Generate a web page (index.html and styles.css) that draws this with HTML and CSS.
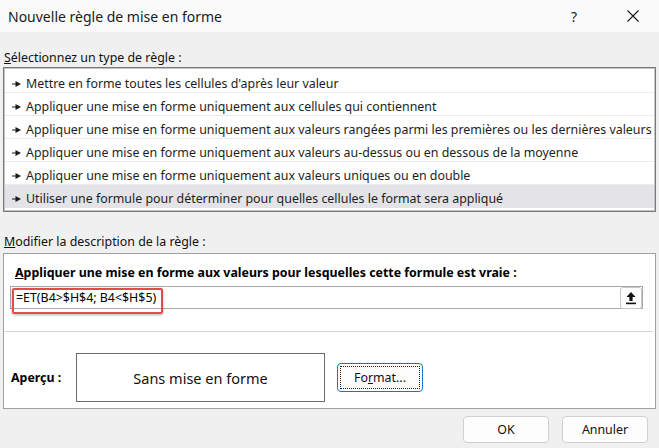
FILE: index.html
```html
<!DOCTYPE html>
<html lang="fr">
<head>
    <meta charset="UTF-8">
    <title>Nouvelle règle de mise en forme</title>
    <link rel="stylesheet" href="styles.css">
</head>
<body>
    <div class="dialog">
        <header class="titlebar">
            <span class="title">Nouvelle règle de mise en forme</span>
            <span class="help">?</span>
            <svg class="close" width="12" height="12" viewBox="0 0 12 12">
                <path d="M0.5 0.5 L11.5 11.5 M11.5 0.5 L0.5 11.5" stroke="#1a1a1a" stroke-width="1.1" fill="none"/>
            </svg>
        </header>

        <div class="content">
            <p class="label"><u>S</u>électionnez un type de règle :</p>
            <ul class="rule-list">
                <li><svg class="arrow" width="9" height="6" viewBox="0 0 9 6"><path d="M0 2.4 H3.5 V0 L9 3 L3.5 6 V3.6 H0 Z" fill="#1a1a1a"/></svg>Mettre en forme toutes les cellules d'après leur valeur</li>
                <li><svg class="arrow" width="9" height="6" viewBox="0 0 9 6"><path d="M0 2.4 H3.5 V0 L9 3 L3.5 6 V3.6 H0 Z" fill="#1a1a1a"/></svg>Appliquer une mise en forme uniquement aux cellules qui contiennent</li>
                <li><svg class="arrow" width="9" height="6" viewBox="0 0 9 6"><path d="M0 2.4 H3.5 V0 L9 3 L3.5 6 V3.6 H0 Z" fill="#1a1a1a"/></svg>Appliquer une mise en forme uniquement aux valeurs rangées parmi les premières ou les dernières valeurs</li>
                <li><svg class="arrow" width="9" height="6" viewBox="0 0 9 6"><path d="M0 2.4 H3.5 V0 L9 3 L3.5 6 V3.6 H0 Z" fill="#1a1a1a"/></svg>Appliquer une mise en forme uniquement aux valeurs au-dessus ou en dessous de la moyenne</li>
                <li><svg class="arrow" width="9" height="6" viewBox="0 0 9 6"><path d="M0 2.4 H3.5 V0 L9 3 L3.5 6 V3.6 H0 Z" fill="#1a1a1a"/></svg>Appliquer une mise en forme uniquement aux valeurs uniques ou en double</li>
                <li class="selected"><svg class="arrow" width="9" height="6" viewBox="0 0 9 6"><path d="M0 2.4 H3.5 V0 L9 3 L3.5 6 V3.6 H0 Z" fill="#1a1a1a"/></svg>Utiliser une formule pour déterminer pour quelles cellules le format sera appliqué</li>
            </ul>

            <p class="label label-desc"><u>M</u>odifier la description de la règle :</p>
            <section class="desc-box">
                <p class="desc-title"><u>A</u>ppliquer une mise en forme aux valeurs pour lesquelles cette formule est vraie :</p>
                <div class="formula">
                    <span class="formula-text">=ET(B4&gt;$H$4; B4&lt;$H$5)</span>
                    <span class="highlight"></span>
                    <button class="collapse">
                        <svg width="12" height="14" viewBox="0 0 12 14">
                            <path d="M6 1 L10.5 6 L7.6 6 L7.6 10 L4.4 10 L4.4 6 L1.5 6 Z" fill="#111"/>
                            <rect x="1" y="11.6" width="10" height="1.6" fill="#111"/>
                        </svg>
                    </button>
                </div>
                <hr class="divider">
                <div class="preview-row">
                    <span class="preview-label">Aperçu :</span>
                    <div class="preview">Sans mise en forme</div>
                    <button class="btn format"><span class="focus">Fo<u>r</u>mat...</span></button>
                </div>
            </section>

            <div class="actions">
                <button class="btn">OK</button>
                <button class="btn">Annuler</button>
            </div>
        </div>
    </div>
</body>
</html>
```

FILE: styles.css
```css
* {
    box-sizing: border-box;
}
body {
    margin: 0;
    padding: 0;
    font-family: 'Noto Sans', 'Open Sans', sans-serif;
    font-size: 12.4px;
    color: #000;
    background: #f0f0f0;
}
.dialog {
    width: 659px;
    height: 448px;
    background: #f0f0f0;
    overflow: hidden;
}
.titlebar {
    height: 32px;
    background: #fafafa;
    display: flex;
    align-items: center;
    padding-left: 8px;
}
.title {
    font-size: 14px;
    flex: 1;
    color: #1a1a1a;
}
.help {
    font-size: 14px;
    margin-right: 50px;
    color: #1a1a1a;
}
.close {
    margin-right: 20px;
}
.content {
    padding: 0 3px;
}
.label {
    margin: 18px 0 1px 1px;
    line-height: 16px;
    color: #111;
}
.label-desc {
    margin-top: 22px;
    margin-bottom: 3px;
}
.rule-list {
    list-style: none;
    margin: 0;
    padding: 2px 1px 1px;
    background: #fff;
    border: 1px solid #7a7a7a;
    box-shadow: inset 0 0 0 1px #c4c4c4;
    height: 145px;
    overflow: hidden;
}
.rule-list li {
    height: 23px;
    padding-top: 5px;
    line-height: 17px;
    border-bottom: 1px solid #ececec;
    padding-left: 7px;
    white-space: nowrap;
    color: #1e1e1e;
}
.rule-list li.selected {
    background: #e3e3e8;
    border-bottom: none;
}
.arrow {
    margin: 0 5px 1px 0;
    vertical-align: middle;
}
.desc-box {
    background: #fff;
    border: 1px solid #a0a0a0;
    height: 156px;
    padding: 0 12px 0 6px;
}
.desc-title {
    font-weight: bold;
    margin: 11px 0 5px 5px;
    line-height: 16px;
}
.formula {
    position: relative;
    height: 23px;
    border: 1px solid #a8a8a8;
    display: flex;
    align-items: center;
    justify-content: space-between;
}
.formula-text {
    padding-left: 5px;
}
.highlight {
    position: absolute;
    left: 1px;
    top: 1px;
    width: 151px;
    height: 26px;
    border: 2.5px solid #e8474d;
    border-radius: 2px;
    box-shadow: 0 1px 3px rgba(0, 0, 0, 0.3);
}
.collapse {
    width: 22px;
    height: 22px;
    padding: 0;
    background: #fff;
    border: 1px solid #c8c8c8;
    border-radius: 3px;
    display: flex;
    align-items: center;
    justify-content: center;
}
.divider {
    border: none;
    border-top: 1px solid #d0d0d0;
    margin: 22px -10px 0 -5px;
}
.preview-row {
    display: flex;
    align-items: center;
    margin-top: 21px;
    margin-left: 1px;
}
.preview-label {
    font-weight: bold;
    width: 65px;
}
.preview {
    width: 249px;
    height: 49px;
    border: 1px solid #6b6b6b;
    display: flex;
    align-items: center;
    justify-content: center;
    font-size: 14.5px;
    color: #111;
}
.btn {
    font-family: 'Noto Sans', 'Open Sans', sans-serif;
    font-size: 12.4px;
    background: #fdfdfd;
    border: 1px solid #d0d0d0;
    border-radius: 4px;
    width: 86px;
    height: 27px;
    color: #111;
    padding: 0;
}
.format {
    width: 86px;
    height: 29px;
    margin-left: 12px;
    border: 1px solid #1a73d0;
    padding: 2px;
}
.focus {
    display: block;
    height: 23px;
    line-height: 21px;
    border: 1px dotted #222;
}
.actions {
    display: flex;
    justify-content: flex-end;
    gap: 13px;
    padding-right: 8px;
    margin-top: 7px;
}
```
